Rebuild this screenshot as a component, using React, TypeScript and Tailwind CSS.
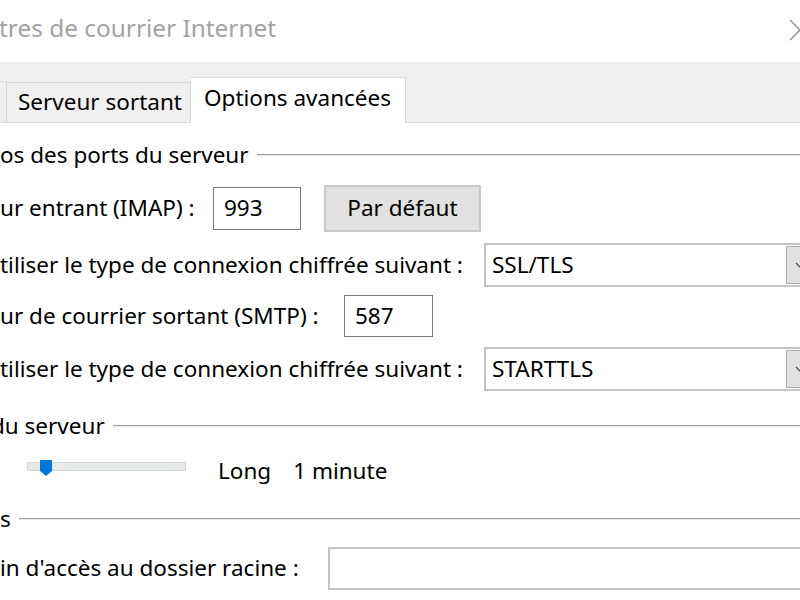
const font = { fontFamily: '"Noto Sans", "Open Sans", sans-serif' };

const SectionHeader = ({ label, shift = "" }: { label: string; shift?: string }) => (
  <div className="flex items-center h-[24px]">
    <span className={`whitespace-nowrap ${shift}`}>{label}</span>
    <div className="flex-1 ml-[8px] h-[2px] border-t border-[#a0a0a0] border-b-[#e6e6e6] border-b" />
  </div>
);

const TextBox = ({ value, className }: { value: string; className: string }) => (
  <div className={`shrink-0 flex items-center border border-[#7a7a7a] bg-white pl-[10px] ${className}`}>
    {value}
  </div>
);

const Dropdown = ({ value }: { value: string }) => (
  <div className="shrink-0 flex items-center w-[360px] h-[44px] border-2 border-[#c4c4c4] bg-white pl-[6px]">
    <span>{value}</span>
    <div className="ml-auto shrink-0 w-[40px] h-[38px] mr-[16px] bg-[#e1e1e1] border border-[#adadad] flex items-center pl-[8px]">
      <svg width="10" height="8" viewBox="0 0 10 8">
        <path d="M1 2 L5 6 L9 2" stroke="#555" strokeWidth="1.3" fill="none" />
      </svg>
    </div>
  </div>
);

export default function App() {
  return (
    <div
      className="relative w-[800px] h-[600px] overflow-hidden bg-white text-[22.5px] text-black leading-none"
      style={font}
    >
      {/* title bar */}
      <div className="flex items-center h-[62px] pb-[5px]">
        <span className="-ml-[1px] text-[24.4px] text-[#a3a3a3] whitespace-nowrap">
          tres de courrier Internet
        </span>
        <svg className="ml-auto -mr-[11px] mt-[3px]" width="22" height="22" viewBox="0 0 22 22">
          <path d="M1 1 L21 21 M21 1 L1 21" stroke="#8a8a8a" strokeWidth="1.3" fill="none" />
        </svg>
      </div>

      {/* tabs */}
      <div className="flex items-end h-[61px] bg-[#f0f0f0] border-b border-[#d9d9d9]">
        <div className="shrink-0 w-[7px] h-[41px] border-t border-r border-[#d9d9d9]" />
        <div className="shrink-0 flex items-center w-[184px] h-[41px] border-t border-r border-[#d9d9d9] pl-[11px] -mb-px pb-px whitespace-nowrap">
          Serveur sortant
        </div>
        <div className="shrink-0 flex items-center w-[215px] h-[46px] bg-white border-t border-r border-[#d9d9d9] pl-[13px] -mb-px pb-[4px] whitespace-nowrap">
          Options avancées
        </div>
      </div>

      {/* content */}
      <div className="flex flex-col">
        <div className="mt-[20px]">
          <SectionHeader label="os des ports du serveur" />
        </div>

        <div className="flex items-center mt-[18px] h-[47px]">
          <span className="shrink-0 w-[213px] whitespace-nowrap">ur entrant (IMAP) :</span>
          <TextBox value="993" className="w-[88px] h-[43px]" />
          <div className="shrink-0 ml-[23px] w-[157px] h-[47px] flex items-center justify-center bg-[#e1e1e1] border-2 border-[#c9c9c9]">
            Par défaut
          </div>
        </div>

        <div className="flex items-center mt-[11px] h-[44px]">
          <span className="shrink-0 w-[484px] whitespace-nowrap">
            tiliser le type de connexion chiffrée suivant :
          </span>
          <Dropdown value="SSL/TLS" />
        </div>

        <div className="flex items-center mt-[8px] h-[42px]">
          <span className="shrink-0 w-[344px] whitespace-nowrap">ur de courrier sortant (SMTP) :</span>
          <TextBox value="587" className="w-[89px] h-[42px]" />
        </div>

        <div className="flex items-center mt-[10px] h-[44px]">
          <span className="shrink-0 w-[484px] whitespace-nowrap">
            tiliser le type de connexion chiffrée suivant :
          </span>
          <Dropdown value="STARTTLS" />
        </div>

        <div className="mt-[23px]">
          <SectionHeader label="du serveur" shift="-ml-[9px]" />
        </div>

        <div className="flex items-center mt-[18px] h-[30px] pl-[27px]">
          <div className="relative shrink-0 w-[159px] h-[9px] mb-[10px] bg-[#e7eaea] border border-[#d6d6d6]">
            <svg className="absolute left-[12px] -top-[3px]" width="12" height="16" viewBox="0 0 12 16">
              <path d="M0 0 H12 V11 L6 16 L0 11 Z" fill="#0078d7" />
            </svg>
          </div>
          <span className="ml-[32px]">Long</span>
          <span className="ml-[22px]">1 minute</span>
        </div>

        <div className="mt-[21px]">
          <SectionHeader label="s" />
        </div>

        <div className="flex items-center mt-[16px] h-[43px]">
          <span className="shrink-0 w-[328px] whitespace-nowrap">in d'accès au dossier racine :</span>
          <div className="shrink-0 w-[480px] h-[43px] border-2 border-[#c4c4c4] bg-white" />
        </div>
      </div>
    </div>
  );
}
